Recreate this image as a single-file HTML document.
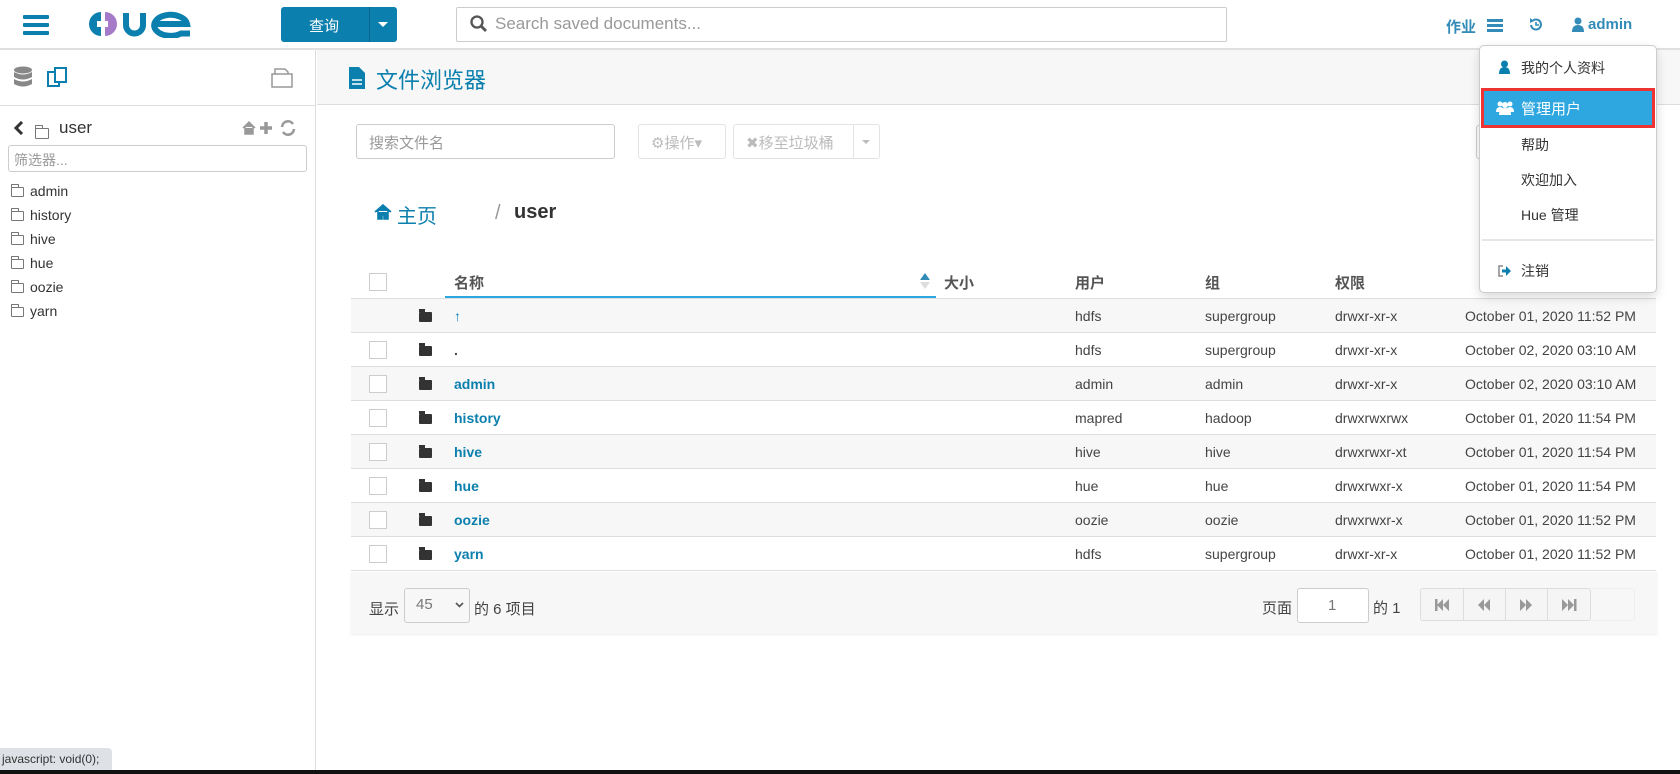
<!DOCTYPE html>
<html><head><meta charset="utf-8"><style>
*{box-sizing:border-box;margin:0;padding:0}
body{width:1680px;height:774px;overflow:hidden;background:#fff;font-family:"Liberation Sans","Noto Sans CJK SC",sans-serif;font-size:14px;color:#444;position:relative}
.a{position:absolute}
.top{left:0;top:0;width:1680px;height:50px;border-bottom:2px solid #e0e0e0;background:#fff}
.side{left:0;top:50px;width:316px;height:720px;border-right:1px solid #ddd}
.tree div{position:absolute;left:11px;font-size:14px;color:#333}
.fold{display:inline-block;width:13px;height:10px;border:1px solid #777;border-radius:1px;margin-right:6px;vertical-align:-1px;position:relative}
.fold:before{content:"";position:absolute;left:-1px;top:-4px;width:6px;height:3px;border:1px solid #777;border-bottom:none;border-radius:1px 1px 0 0}
.row{position:absolute;left:351px;width:1305px;height:34px;border-bottom:1px solid #ddd;font-size:14px;color:#444}
.row span{position:absolute;top:9px}
.row .n{left:103px;color:#0b7fad;font-weight:bold}
.cb{position:absolute;left:18px;top:8px;width:18px;height:18px;border:1px solid #ccc;background:#fff}
.fi{position:absolute;left:68px;top:13px;width:13px;height:10px;background:#333;border-radius:1px}
.fi:before{content:"";position:absolute;left:0;top:-3px;width:6px;height:3px;background:#333}
.c1{left:724px}.c2{left:854px}.c3{left:984px}.c4{left:1114px}
.menu div{position:absolute;left:41px;font-size:14px;color:#333}
</style></head><body>
<div class="a top"></div>
<div class="a" style="left:23px;top:15px;width:26px;height:4px;background:#0b7fad;border-radius:1px"></div>
<div class="a" style="left:23px;top:23px;width:26px;height:4px;background:#0b7fad;border-radius:1px"></div>
<div class="a" style="left:23px;top:31px;width:26px;height:4px;background:#0b7fad;border-radius:1px"></div>
<svg class="a" style="left:89px;top:10px" width="104" height="28" viewBox="0 0 104 28">
<path d="M12 2 A12 12 0 0 0 12 26 L12 17 L8 17 L8 11 L12 11 Z" fill="#0b7fad"/>
<path d="M16 2 A12 12 0 0 1 16 26 L16 17 L19 17 L19 11 L16 11Z" fill="#a57bc9"/>
<path d="M37 3 V15 A8.5 8.5 0 0 0 54 15 V3" fill="none" stroke="#0b7fad" stroke-width="6"/>
<path d="M64 14 H98 A16.5 10.5 0 1 0 92 23.5 H101" fill="none" stroke="#0b7fad" stroke-width="6"/>
</svg>
<div class="a" style="left:281px;top:7px;width:116px;height:35px;background:#0b7fad;border-radius:3px"></div>
<div class="a" style="left:369px;top:7px;width:1px;height:35px;background:#08668c"></div>
<div class="a" style="left:309px;top:15px;color:#fff;font-size:15px">查询</div>
<div class="a" style="left:378px;top:22px;border-left:5px solid transparent;border-right:5px solid transparent;border-top:5px solid #fff"></div>
<div class="a" style="left:456px;top:7px;width:771px;height:35px;border:1px solid #ccc;border-radius:2px"></div>
<svg class="a" style="left:470px;top:15px" width="18" height="18"><circle cx="7" cy="7" r="5.5" stroke="#555" stroke-width="2.3" fill="none"/><path d="M11 11 L16 16" stroke="#555" stroke-width="2.8"/></svg>
<div class="a" style="left:495px;top:14px;font-size:17px;color:#999">Search saved documents...</div>
<div class="a" style="left:1446px;top:16px;font-size:15px;font-weight:bold;color:#338bb8">作业</div>
<div class="a" style="left:1487px;top:19px;width:16px;height:3px;background:#338bb8;box-shadow:0 5px 0 #338bb8,0 10px 0 #338bb8"></div>
<svg class="a" style="left:1528px;top:17px" width="16" height="16"><path d="M3 8 A5 5 0 1 0 5 3.5" fill="none" stroke="#338bb8" stroke-width="2"/><path d="M2 1 L6 4 L2 6Z" fill="#338bb8"/><path d="M8 5 v3 h3" fill="none" stroke="#338bb8" stroke-width="1.6"/></svg>
<svg class="a" style="left:1572px;top:17px" width="12" height="15"><circle cx="6" cy="4" r="3.5" fill="#338bb8"/><path d="M0 15 Q0 8 6 8 Q12 8 12 15Z" fill="#338bb8"/></svg>
<div class="a" style="left:1588px;top:16px;font-size:15px;font-weight:bold;color:#338bb8">admin</div>

<div class="a side"></div>
<div class="a" style="left:0;top:105px;width:316px;height:1px;background:#ddd"></div>
<svg class="a" style="left:13px;top:66px" width="20" height="23"><ellipse cx="10" cy="4" rx="9" ry="3.5" fill="#888"/><path d="M1 6 q9 5 18 0 v5 q-9 5 -18 0z M1 13 q9 5 18 0 v5 q-9 5 -18 0z" fill="#888"/></svg>
<svg class="a" style="left:47px;top:66px" width="22" height="22"><rect x="1" y="6" width="11" height="14" fill="none" stroke="#0b7fad" stroke-width="2"/><rect x="8" y="2" width="11" height="14" fill="#fff" stroke="#0b7fad" stroke-width="2"/></svg>
<svg class="a" style="left:270px;top:66px" width="25" height="22"><path d="M2 8 h20 v13 h-20z M5 8 v-5 h10 l3 3 v2" fill="none" stroke="#999" stroke-width="1.5"/></svg>
<svg class="a" style="left:14px;top:121px" width="10" height="14"><path d="M8 1 L2 7 L8 13" fill="none" stroke="#333" stroke-width="3"/></svg>
<div class="a" style="left:35px;top:125px"><span class="fold" style="width:14px;height:11px"></span></div>
<div class="a" style="left:59px;top:118px;font-size:17px;color:#333">user</div>
<svg class="a" style="left:242px;top:120px" width="58" height="16"><path d="M1 8 L7 2 L13 8 M3 7 v7 h8 v-7" fill="#999" stroke="#999" stroke-width="1.5"/><path d="M24 2 v12 M18 8 h12" stroke="#999" stroke-width="3.5"/><path d="M51 4 A6 6 0 0 0 40 7 M41 12 A6 6 0 0 0 52 9" fill="none" stroke="#999" stroke-width="2.5"/></svg>
<div class="a" style="left:8px;top:145px;width:299px;height:27px;border:1px solid #ccc;border-radius:3px"></div>
<div class="a" style="left:14px;top:150px;font-size:14px;color:#999">筛选器...</div>
<div class="tree">
<div style="top:183px"><span class="fold"></span>admin</div>
<div style="top:207px"><span class="fold"></span>history</div>
<div style="top:231px"><span class="fold"></span>hive</div>
<div style="top:255px"><span class="fold"></span>hue</div>
<div style="top:279px"><span class="fold"></span>oozie</div>
<div style="top:303px"><span class="fold"></span>yarn</div>
</div>

<div class="a" style="left:317px;top:50px;width:1363px;height:55px;background:#f7f7f7;border-bottom:1px solid #ddd"></div>
<svg class="a" style="left:349px;top:67px" width="16" height="22"><path d="M0 0 h10 l6 6 v16 h-16z" fill="#0b7fad"/><path d="M3 13 h10 M3 17 h10" stroke="#fff" stroke-width="1.5"/></svg>
<div class="a" style="left:376px;top:63px;font-size:22px;color:#0b7fad">文件浏览器</div>

<div class="a" style="left:356px;top:124px;width:259px;height:35px;border:1px solid #ccc;border-radius:3px"></div>
<div class="a" style="left:369px;top:132px;font-size:15px;color:#999">搜索文件名</div>
<div class="a" style="left:638px;top:124px;width:88px;height:35px;border:1px solid #e3e3e3;border-radius:3px"></div>
<div class="a" style="left:651px;top:132px;font-size:15px;color:#bbb">⚙操作▾</div>
<div class="a" style="left:733px;top:124px;width:147px;height:35px;border:1px solid #e3e3e3;border-radius:3px"></div>
<div class="a" style="left:853px;top:124px;width:1px;height:35px;background:#e3e3e3"></div>
<div class="a" style="left:746px;top:132px;font-size:15px;color:#bbb">✖移至垃圾桶</div>
<div class="a" style="left:862px;top:140px;border-left:4px solid transparent;border-right:4px solid transparent;border-top:4px solid #bbb"></div>
<div class="a" style="left:1476px;top:125px;width:10px;height:34px;border:1px solid #ccc;border-radius:3px 0 0 3px"></div>

<svg class="a" style="left:374px;top:204px" width="18" height="16"><path d="M1 8 L9 1 L17 8 M4 7 v8 h4 v-4 h2 v4 h4 v-8" fill="#0b7fad" stroke="#0b7fad" stroke-width="1.6"/></svg>
<div class="a" style="left:397px;top:200px;font-size:20px;color:#0b7fad">主页</div>
<div class="a" style="left:495px;top:202px;font-size:20px;color:#999">/</div>
<div class="a" style="left:514px;top:201px;font-size:20px;font-weight:bold;color:#333">user</div>

<div class="a" style="left:351px;top:298px;width:1305px;height:1px;background:#ddd"></div>
<div class="a" style="left:369px;top:273px;width:18px;height:18px;border:1px solid #ccc"></div>
<div class="a" style="left:454px;top:272px;font-size:15px;font-weight:bold;color:#555">名称</div>
<div class="a" style="left:445px;top:296px;width:491px;height:2px;background:#2ea7e0"></div>
<div class="a" style="left:920px;top:273px;border-left:5px solid transparent;border-right:5px solid transparent;border-bottom:7px solid #338bb8"></div>
<div class="a" style="left:920px;top:282px;border-left:5px solid transparent;border-right:5px solid transparent;border-top:7px solid #ddd"></div>
<div class="a" style="left:944px;top:272px;font-size:15px;font-weight:bold;color:#555">大小</div>
<div class="a" style="left:1075px;top:272px;font-size:15px;font-weight:bold;color:#555">用户</div>
<div class="a" style="left:1205px;top:272px;font-size:15px;font-weight:bold;color:#555">组</div>
<div class="a" style="left:1335px;top:272px;font-size:15px;font-weight:bold;color:#555">权限</div>

<div class="row" style="top:299px;background:#f7f7f7"><i class="fi"></i><span class="n">↑</span><span class="c1">hdfs</span><span class="c2">supergroup</span><span class="c3">drwxr-xr-x</span><span class="c4">October 01, 2020 11:52 PM</span></div>
<div class="row" style="top:333px"><i class="cb"></i><i class="fi"></i><span class="n" style="color:#444">.</span><span class="c1">hdfs</span><span class="c2">supergroup</span><span class="c3">drwxr-xr-x</span><span class="c4">October 02, 2020 03:10 AM</span></div>
<div class="row" style="top:367px;background:#f7f7f7"><i class="cb"></i><i class="fi"></i><span class="n">admin</span><span class="c1">admin</span><span class="c2">admin</span><span class="c3">drwxr-xr-x</span><span class="c4">October 02, 2020 03:10 AM</span></div>
<div class="row" style="top:401px"><i class="cb"></i><i class="fi"></i><span class="n">history</span><span class="c1">mapred</span><span class="c2">hadoop</span><span class="c3">drwxrwxrwx</span><span class="c4">October 01, 2020 11:54 PM</span></div>
<div class="row" style="top:435px;background:#f7f7f7"><i class="cb"></i><i class="fi"></i><span class="n">hive</span><span class="c1">hive</span><span class="c2">hive</span><span class="c3">drwxrwxr-xt</span><span class="c4">October 01, 2020 11:54 PM</span></div>
<div class="row" style="top:469px"><i class="cb"></i><i class="fi"></i><span class="n">hue</span><span class="c1">hue</span><span class="c2">hue</span><span class="c3">drwxrwxr-x</span><span class="c4">October 01, 2020 11:54 PM</span></div>
<div class="row" style="top:503px;background:#f7f7f7"><i class="cb"></i><i class="fi"></i><span class="n">oozie</span><span class="c1">oozie</span><span class="c2">oozie</span><span class="c3">drwxrwxr-x</span><span class="c4">October 01, 2020 11:52 PM</span></div>
<div class="row" style="top:537px"><i class="cb"></i><i class="fi"></i><span class="n">yarn</span><span class="c1">hdfs</span><span class="c2">supergroup</span><span class="c3">drwxr-xr-x</span><span class="c4">October 01, 2020 11:52 PM</span></div>

<div class="a" style="left:351px;top:572px;width:1306px;height:62px;background:#f7f7f7;box-shadow:0 1px 2px rgba(0,0,0,.08)"></div>
<div class="a" style="left:369px;top:598px;font-size:15px;color:#444">显示</div>
<div class="a" style="left:404px;top:588px;width:66px;height:35px;border:1px solid #ccc;border-radius:3px;background:#f7f7f7"></div>
<div class="a" style="left:416px;top:596px;font-size:15px;color:#777">45</div>
<svg class="a" style="left:455px;top:602px" width="9" height="6"><path d="M1 1 L4.5 4.5 L8 1" fill="none" stroke="#555" stroke-width="1.6"/></svg>
<div class="a" style="left:474px;top:598px;font-size:15px;color:#444">的 6 项目</div>
<div class="a" style="left:1262px;top:597px;font-size:15px;color:#444">页面</div>
<div class="a" style="left:1297px;top:588px;width:72px;height:35px;border:1px solid #ccc;border-radius:3px;background:#fff"></div>
<div class="a" style="left:1328px;top:597px;font-size:15px;color:#777">1</div>
<div class="a" style="left:1373px;top:597px;font-size:15px;color:#444">的 1</div>
<div class="a" style="left:1420px;top:588px;width:171px;height:33px;border:1px solid #ddd;border-radius:3px;background:#f5f5f5"></div>
<div class="a" style="left:1591px;top:588px;width:44px;height:33px;border:1px solid #eee;border-left:none;border-radius:0 3px 3px 0"></div>
<div class="a" style="left:1463px;top:588px;width:1px;height:33px;background:#ddd"></div>
<div class="a" style="left:1505px;top:588px;width:1px;height:33px;background:#ddd"></div>
<div class="a" style="left:1547px;top:588px;width:1px;height:33px;background:#ddd"></div>
<svg class="a" style="left:1420px;top:588px" width="171" height="33" fill="#999">
<rect x="15" y="11" width="2.5" height="12"/><path d="M17 17 L23 11 V23Z M23 17 L29 11 V23Z"/>
<path d="M58 17 L64 11 V23Z M64 17 L70 11 V23Z"/>
<path d="M100 11 L106 17 L100 23Z M106 11 L112 17 L106 23Z"/>
<path d="M142 11 L148 17 L142 23Z M148 11 L154 17 L148 23Z"/><rect x="154" y="11" width="2.5" height="12"/>
</svg>

<div class="a menu" style="left:1479px;top:45px;width:178px;height:248px;background:#fff;border:1px solid #ccc;border-radius:5px;box-shadow:0 4px 10px rgba(0,0,0,.15)">
<svg class="a" style="left:19px;top:14px" width="11" height="14"><circle cx="5.5" cy="4" r="3.5" fill="#0b7fad"/><path d="M0 14 Q0 7 5.5 7 Q11 7 11 14Z" fill="#0b7fad"/></svg>
<div style="top:12px">我的个人资料</div>
<div class="a" style="left:1px;top:42px;width:174px;height:40px;background:#2ea7e0;border:3px solid #e33"></div>
<div style="top:52px;color:#fff;font-size:15px">管理用户</div>
<svg class="a" style="left:16px;top:54px" width="18" height="15" fill="#fff"><circle cx="4" cy="4" r="2.5"/><circle cx="14" cy="4" r="2.5"/><circle cx="9" cy="5" r="3"/><path d="M0 12 Q0 7 4 7 Q8 7 8 12Z M10 12 Q10 7 14 7 Q18 7 18 12Z M3 15 Q3 8 9 8 Q15 8 15 15Z"/></svg>
<div style="top:89px">帮助</div>
<div style="top:124px">欢迎加入</div>
<div style="top:159px">Hue 管理</div>
<div class="a" style="left:2px;top:193px;width:172px;height:2px;background:#e5e5e5"></div>
<div style="top:215px">注销</div>
<svg class="a" style="left:18px;top:219px" width="14" height="12"><path d="M5 1 H1 V11 H5" fill="none" stroke="#888" stroke-width="1.5"/><path d="M4 4.5 H8 V1 L13 6 L8 11 V7.5 H4Z" fill="#0b7fad"/></svg>
</div>

<div class="a" style="left:0;top:748px;width:112px;height:22px;background:#dee1e6;border-radius:0 4px 0 0;font-size:12px;color:#333;padding:4px 2px">javascript: void(0);</div>
<div class="a" style="left:0;top:770px;width:1680px;height:4px;background:#111"></div>
</body></html>
